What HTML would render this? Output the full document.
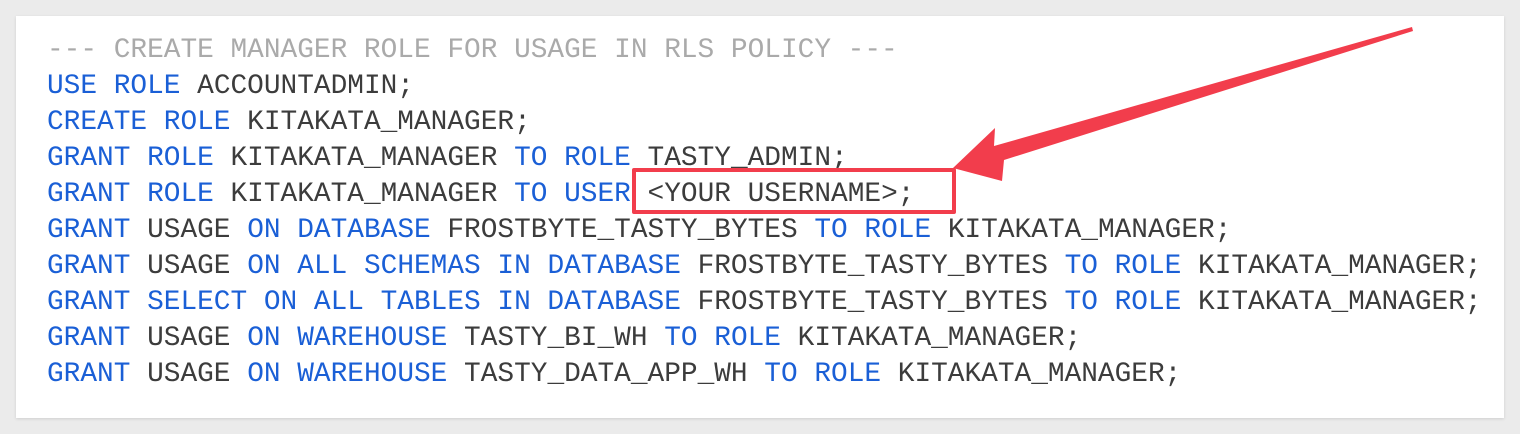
<!DOCTYPE html>
<html><head><style>
html,body{margin:0;padding:0;}
body{width:1520px;height:434px;background:#ebebeb;position:relative;overflow:hidden;}
.card{position:absolute;left:16px;top:16px;width:1488px;height:402px;background:#fff;box-shadow:0 1px 3px rgba(0,0,0,.12);}
pre{position:absolute;left:47px;top:33px;margin:0;font-family:"Liberation Mono",monospace;font-size:27.8px;line-height:36px;color:#3c3c3c;}
.k{color:#1a5fd6}.c{color:#aaaaaa}
.box{position:absolute;left:632px;top:168px;width:316px;height:38px;border:4px solid #f23d4c;border-radius:2px;}
svg{position:absolute;left:0;top:0;}
</style></head><body>
<div class="card"></div>
<pre><span class="c">--- CREATE MANAGER ROLE FOR USAGE IN RLS POLICY ---</span>
<span class="k">USE ROLE</span> ACCOUNTADMIN;
<span class="k">CREATE ROLE</span> KITAKATA_MANAGER;
<span class="k">GRANT ROLE</span> KITAKATA_MANAGER <span class="k">TO ROLE</span> TASTY_ADMIN;
<span class="k">GRANT ROLE</span> KITAKATA_MANAGER <span class="k">TO USER</span> &lt;YOUR USERNAME&gt;;
<span class="k">GRANT</span> USAGE <span class="k">ON DATABASE</span> FROSTBYTE_TASTY_BYTES <span class="k">TO ROLE</span> KITAKATA_MANAGER;
<span class="k">GRANT</span> USAGE <span class="k">ON ALL SCHEMAS IN DATABASE</span> FROSTBYTE_TASTY_BYTES <span class="k">TO ROLE</span> KITAKATA_MANAGER;
<span class="k">GRANT SELECT ON ALL TABLES IN DATABASE</span> FROSTBYTE_TASTY_BYTES <span class="k">TO ROLE</span> KITAKATA_MANAGER;
<span class="k">GRANT</span> USAGE <span class="k">ON WAREHOUSE</span> TASTY_BI_WH <span class="k">TO ROLE</span> KITAKATA_MANAGER;
<span class="k">GRANT</span> USAGE <span class="k">ON WAREHOUSE</span> TASTY_DATA_APP_WH <span class="k">TO ROLE</span> KITAKATA_MANAGER;</pre>
<div class="box"></div>
<svg width="1520" height="434"><path d="M1412,27 L1413,31 L1004,160 L1002,181 L953,168 L995,128 L994,146 Z" fill="#f23d4c"/></svg>
</body></html>
